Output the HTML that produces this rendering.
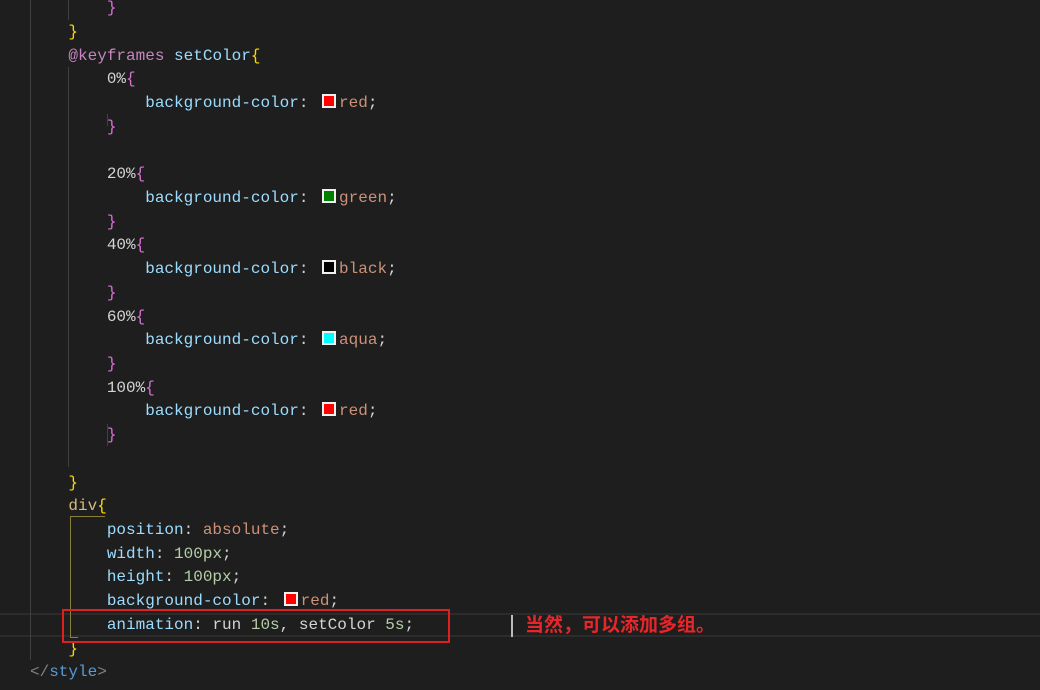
<!DOCTYPE html>
<html><head><meta charset="utf-8"><style>
html,body{margin:0;padding:0;background:#1e1e1e;width:1040px;height:690px;overflow:hidden;position:relative}
#c{position:absolute;left:0;top:2px;width:1040px;height:690px}
.l{position:absolute;left:30px;height:23.72px;line-height:23.72px;font-family:"Liberation Mono",monospace;font-size:16px;white-space:pre;color:#d4d4d4}
.p{color:#9cdcfe}.v{color:#ce9178}.n{color:#b5cea8}.s{color:#d7ba7d}.k{color:#c586c0}
.y{color:#ffd700}.m{color:#da70d6}.b{color:#179fff}.g{color:#808080}.t{color:#569cd6}
.sw{display:inline-block;width:10px;height:10px;border:2px solid #f0f0f0;margin:0 3px 0 4px;vertical-align:-1px}
.gd{position:absolute;width:1px;background:#404040}
</style></head><body>
<div style="position:absolute;left:0;top:613px;width:1040px;height:24px;border-top:2px solid #2c2c2c;border-bottom:2px solid #2c2c2c;box-sizing:border-box"></div>
<div class="gd" style="left:30px;top:0;height:660px"></div>
<div class="gd" style="left:68px;top:0;height:20px"></div>
<div class="gd" style="left:68px;top:67px;height:400px"></div>
<div class="gd" style="left:107px;top:114px;height:12px"></div>
<div class="gd" style="left:107px;top:424px;height:22px"></div>
<div style="position:absolute;left:70px;top:516px;width:34px;height:121px;border-left:1px solid #8a7f3a;border-top:1px solid #8a7f3a"></div>
<div style="position:absolute;left:70px;top:637px;width:8px;height:1px;background:#8a7f3a"></div>
<div id="c">
<div class="l" style="top:-4.9px">        <span class="m">}</span></div>
<div class="l" style="top:18.8px">    <span class="y">}</span></div>
<div class="l" style="top:42.5px">    <span class="k">@keyframes</span> <span class="p">setColor</span><span class="y">{</span></div>
<div class="l" style="top:66.3px">        0%<span class="m">{</span></div>
<div class="l" style="top:90px">            <span class="p">background-color</span>: <span class="sw" style="background:red"></span><span class="v">red</span>;</div>
<div class="l" style="top:113.7px">        <span class="m">}</span></div>
<div class="l" style="top:161.2px">        20%<span class="m">{</span></div>
<div class="l" style="top:184.9px">            <span class="p">background-color</span>: <span class="sw" style="background:green"></span><span class="v">green</span>;</div>
<div class="l" style="top:208.6px">        <span class="m">}</span></div>
<div class="l" style="top:232.3px">        40%<span class="m">{</span></div>
<div class="l" style="top:256px">            <span class="p">background-color</span>: <span class="sw" style="background:black"></span><span class="v">black</span>;</div>
<div class="l" style="top:279.8px">        <span class="m">}</span></div>
<div class="l" style="top:303.5px">        60%<span class="m">{</span></div>
<div class="l" style="top:327.2px">            <span class="p">background-color</span>: <span class="sw" style="background:aqua"></span><span class="v">aqua</span>;</div>
<div class="l" style="top:350.9px">        <span class="m">}</span></div>
<div class="l" style="top:374.6px">        100%<span class="m">{</span></div>
<div class="l" style="top:398.4px">            <span class="p">background-color</span>: <span class="sw" style="background:red"></span><span class="v">red</span>;</div>
<div class="l" style="top:422.1px">        <span class="m">}</span></div>
<div class="l" style="top:469.5px">    <span class="y">}</span></div>
<div class="l" style="top:493.2px">    <span class="s">div</span><span class="y">{</span></div>
<div class="l" style="top:517px">        <span class="p">position</span>: <span class="v">absolute</span>;</div>
<div class="l" style="top:540.7px">        <span class="p">width</span>: <span class="n">100px</span>;</div>
<div class="l" style="top:564.4px">        <span class="p">height</span>: <span class="n">100px</span>;</div>
<div class="l" style="top:588.1px">        <span class="p">background-color</span>: <span class="sw" style="background:red"></span><span class="v">red</span>;</div>
<div class="l" style="top:611.8px">        <span class="p">animation</span>: run <span class="n">10s</span>, setColor <span class="n">5s</span>;</div>
<div class="l" style="top:635.6px">    <span class="y">}</span></div>
<div class="l" style="top:659.3px"><span class="g">&lt;/</span><span class="t">style</span><span class="g">&gt;</span></div>
</div>
<div style="position:absolute;left:62px;top:609px;width:384px;height:30px;border:2px solid #e02020"></div>
<div style="position:absolute;left:511px;top:615px;width:2px;height:22px;background:#bbb"></div>
<div style="position:absolute;left:525px;top:613px;font-family:'Liberation Sans','Noto Sans CJK SC',sans-serif;font-weight:bold;font-size:19px;line-height:25px;color:#e8262a">当然，可以添加多组。</div>
</body></html>
